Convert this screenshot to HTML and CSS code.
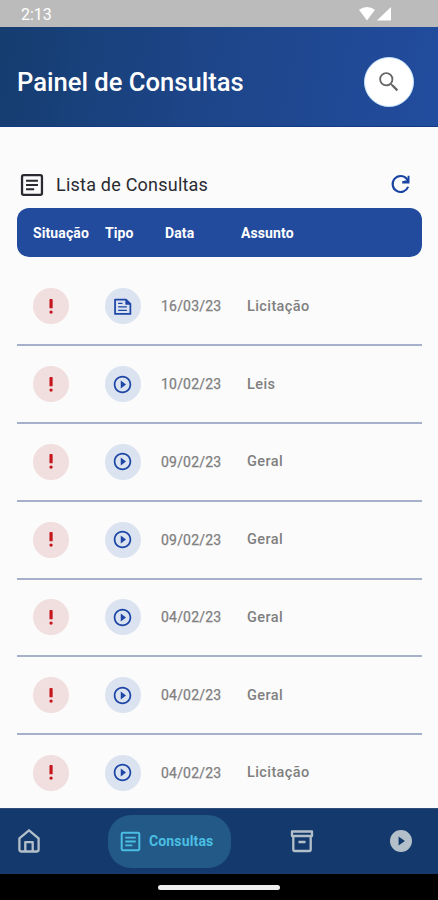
FILE: index.html
```html
<!DOCTYPE html>
<html lang="pt-BR">
<head>
<meta charset="utf-8">
<title>Painel de Consultas</title>
<link rel="stylesheet" href="styles.css">
</head>
<body>
<svg class="defs" aria-hidden="true">
  <symbol id="alert" viewBox="0 0 24 24"><path fill="currentColor" d="M9.700 4.300q0-1 1-1h1.600q1 0 1 1V14H9.700zM11.500 16.500a1.900 1.900 0 0 1 0 3.800 1.900 1.900 0 0 1 0-3.800z"/></symbol>
  <symbol id="play" viewBox="0 0 24 24"><path fill="currentColor" d="M10 16.500l6-4.500-6-4.500v9zM12 2C6.480 2 2 6.480 2 12s4.480 10 10 10 10-4.480 10-10S17.520 2 12 2zm0 18c-4.410 0-8-3.590-8-8s3.590-8 8-8 8 3.590 8 8-3.590 8-8 8z"/></symbol>
  <symbol id="article" viewBox="0 0 24 24"><rect x="2.800" y="2.800" width="18.400" height="18.400" rx="1.500" fill="none" stroke="currentColor" stroke-width="2.100"/><path stroke="currentColor" stroke-width="1.900" d="M6.500 8h11M6.500 12h11M6.500 16h7.500"/></symbol>
</svg>
<div class="screen">
  <div class="status">
    <span class="time">2:13</span>
    <svg class="signals" width="34" height="16" viewBox="0 0 34 16"><path fill="#fff" d="M1 3.800Q9 -1.800 17 3.800L9 14.500zM33 1v13.500H18.800z"/></svg>
  </div>
  <header class="header">
    <h1 class="title">Painel de Consultas</h1>
    <button class="search" aria-label="Buscar"><svg width="26" height="26" viewBox="0 0 24 24"><path fill="#666" d="M15.500 14h-.79l-.28-.27A6.470 6.470 0 0 0 16 9.500 6.500 6.500 0 1 0 9.500 16c1.610 0 3.090-.59 4.230-1.570l.27.28v.79l5 4.990L20.490 19l-4.990-5zm-6 0.300C6.850 14.300 4.700 12.150 4.700 9.500S6.850 4.700 9.500 4.700 14.300 6.850 14.300 9.500 12.150 14.300 9.500 14.300z"/></svg></button>
  </header>
  <main class="content">
    <div class="list-title">
      <svg width="26" height="26"><use href="#article"/></svg>
      <h2 class="subtitle">Lista de Consultas</h2>
      <svg class="refresh" width="27" height="27" viewBox="0 0 24 24"><path fill="none" stroke="currentColor" stroke-width="1.900" d="M18.800 14a7.100 7.100 0 1 1-1.300-7.100L19 8.500"/><path fill="currentColor" d="M20 4.300V11h-6.500V9.200L18.300 8V4.300z"/></svg>
    </div>
    <div class="cols table-head"><span>Situação</span><span>Tipo</span><span>Data</span><span>Assunto</span></div>
    <div class="rows">
      <div class="cols row"><span class="dot red"><svg><use href="#alert"/></svg></span><span class="dot blue"><svg viewBox="0 0 24 24"><path fill="none" stroke="currentColor" stroke-width="2" stroke-linejoin="round" d="M3.500 4h12.500l5 5v11.500H3.500z"/><path fill="currentColor" d="M15.300 4v6H21z"/><path stroke="currentColor" stroke-width="1.400" d="M7 8.500h5M7 12.500h10M7 16.500h10"/></svg></span><span class="date">16/03/23</span><span class="subject">Licitação</span></div>
      <div class="cols row"><span class="dot red"><svg><use href="#alert"/></svg></span><span class="dot blue"><svg><use href="#play"/></svg></span><span class="date">10/02/23</span><span class="subject">Leis</span></div>
      <div class="cols row"><span class="dot red"><svg><use href="#alert"/></svg></span><span class="dot blue"><svg><use href="#play"/></svg></span><span class="date">09/02/23</span><span class="subject">Geral</span></div>
      <div class="cols row"><span class="dot red"><svg><use href="#alert"/></svg></span><span class="dot blue"><svg><use href="#play"/></svg></span><span class="date">09/02/23</span><span class="subject">Geral</span></div>
      <div class="cols row"><span class="dot red"><svg><use href="#alert"/></svg></span><span class="dot blue"><svg><use href="#play"/></svg></span><span class="date">04/02/23</span><span class="subject">Geral</span></div>
      <div class="cols row"><span class="dot red"><svg><use href="#alert"/></svg></span><span class="dot blue"><svg><use href="#play"/></svg></span><span class="date">04/02/23</span><span class="subject">Geral</span></div>
      <div class="cols row"><span class="dot red"><svg><use href="#alert"/></svg></span><span class="dot blue"><svg><use href="#play"/></svg></span><span class="date">04/02/23</span><span class="subject">Licitação</span></div>
    </div>
  </main>
  <nav class="nav">
    <svg class="home" width="24" height="26" viewBox="0 0 24 26" fill="none" stroke="currentColor" stroke-width="2.300" stroke-linejoin="round"><path d="M2.400 10.300L12 2.300l9.600 8v11.200q0 2-2 2H4.400q-2 0-2-2z"/><path d="M8.300 23.500v-9.300h7.400v9.300"/></svg>
    <span class="active"><svg width="23" height="23"><use href="#article"/></svg><span>Consultas</span></span>
    <svg class="archive" width="24" height="24" viewBox="0 0 24 24" fill="none" stroke="currentColor" stroke-width="2.300" stroke-linejoin="round"><path d="M2 2.500h20V7H2zM3.300 7v13.500q0 1.500 1.500 1.500h14.400q1.500 0 1.500-1.500V7M8.500 13h7"/></svg>
    <svg class="media" width="22" height="22" viewBox="2 2 20 20"><path fill="currentColor" fill-rule="evenodd" d="M12 2a10 10 0 1 0 0 20 10 10 0 0 0 0-20zm-2.200 14V8l5.800 4z"/></svg>
  </nav>
  <div class="gesture"><span class="bar"></span></div>
</div>
</body>
</html>
```
FILE: styles.css
```css
* { box-sizing: border-box; }
body { margin: 0; font-family: Roboto, "Liberation Sans", sans-serif; background: #fbfbfb; }
h1, h2 { margin: 0; }
svg { flex: none; }
.defs { display: none; }
.screen { width: 438px; height: 900px; display: flex; flex-direction: column; overflow: hidden; }
.status { height: 27px; flex: none; background: #bbb; display: flex; align-items: center; justify-content: space-between; padding: 0 46px 0 21px; color: #fff; }
.time { font-size: 16px; line-height: 20px; padding-top: 2px; }
.header { height: 100px; flex: none; display: flex; align-items: center; justify-content: space-between; padding: 11px 24px 0 17px; background: linear-gradient(100deg, #153d70, #1d4588 45%, #224c9e); border-bottom: 1px solid #123984; }
.title { font-size: 25.600px; font-weight: 500; line-height: 30px; color: #fff; }
.search { width: 50px; height: 50px; border: 1px solid #c2e1fb; border-radius: 50%; background: #fff; padding: 0; display: flex; align-items: center; justify-content: center; }
.content { flex: 1; min-height: 0; overflow: hidden; padding: 44px 16.500px 0 17px; }
.list-title { height: 37px; padding: 0 8px 10px 2px; display: flex; align-items: center; color: #2a2a30; }
.subtitle { flex: 1; margin-left: 11px; font-size: 18px; font-weight: 400; line-height: 24px; letter-spacing: .22px; }
.refresh { color: #1943a3; }
.cols { display: grid; grid-template-columns: 71.500px 56.500px 86px 1fr; align-items: center; padding-left: 16px; }
.table-head { height: 49px; border-radius: 12px; background: #224b9e; color: #fff; font-size: 14px; font-weight: 700; letter-spacing: .1px; grid-template-columns: 72px 60px 76px 1fr; }
.rows { padding-top: 11.500px; }
.row { height: 77.750px; border-bottom: 2px solid #a5b0cb; color: #808080; }
.date { font-size: 14px; font-weight: 400; letter-spacing: .2px; -webkit-text-stroke: .25px; }
.subject { font-size: 14.500px; font-weight: 500; letter-spacing: .4px; }
.dot { width: 36px; height: 36px; border-radius: 50%; display: flex; align-items: center; justify-content: center; }
.dot svg { width: 21px; height: 21px; }
.red { background: #f1dede; color: #c5161d; }
.blue { background: #dce3f0; color: #1d46a7; }
.dot.blue svg { width: 21px; height: 21px; margin-right: 1px; }
.nav { height: 66px; flex: none; background: #143a6d; border-top: 1px solid #304f78; display: flex; align-items: center; padding: 0 26px 1px 17px; color: #b4c0c9; }
.active { width: 123px; height: 53px; margin-left: 67px; border-radius: 23px; background: #225987; color: #4abfe3; display: flex; align-items: center; padding-left: 11px; gap: 7px; font-size: 14px; font-weight: 700; letter-spacing: .15px; }
.archive { margin-left: 59px; }
.media { margin-left: auto; }
.gesture { height: 26px; flex: none; background: #000; display: flex; align-items: center; justify-content: center; }
.bar { width: 122px; height: 5px; border-radius: 3px; background: #eee; }
```
